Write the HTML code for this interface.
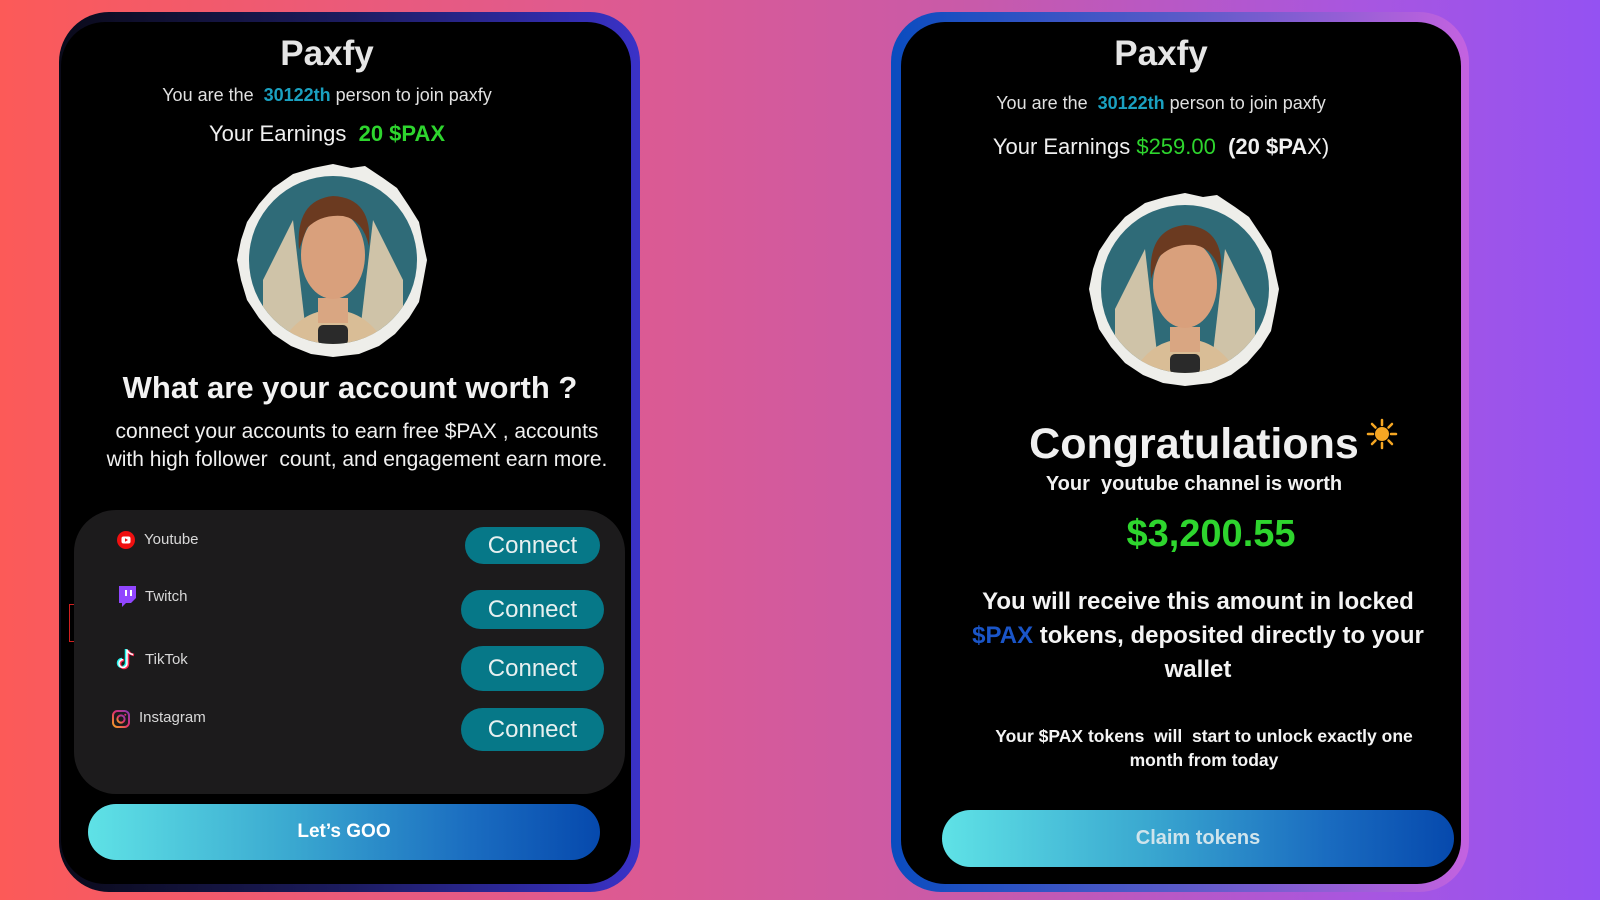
<!DOCTYPE html>
<html><head><meta charset="utf-8"><style>
*{margin:0;padding:0;box-sizing:border-box}
body{width:1600px;height:900px;overflow:hidden;position:relative;font-family:"Liberation Sans",sans-serif;background:linear-gradient(90deg,#fc5a58 0%,#e05a8e 35%,#c95aa8 60%,#a856e0 85%,#9452f2 100%)}
.abs{position:absolute}
.c{text-align:center;white-space:nowrap}
.card{position:absolute;border-radius:50px}
.inner{position:absolute;background:#000;border-radius:44px}
.btn{position:absolute;background:#067888;border-radius:22px;color:#e8f0f0;font-size:24px;text-align:center}
.row{position:absolute;color:#d8d8d8;font-size:15px}
.grad{position:absolute;border-radius:30px;background:linear-gradient(90deg,#5fe2e6 0%,#3aa8d0 40%,#1a6cc0 75%,#0649ad 100%);text-align:center;font-weight:bold}
</style></head><body>

<!-- LEFT CARD -->
<div class="card" style="left:59px;top:12px;width:581px;height:880px;background:linear-gradient(90deg,#0a0a1a 0%,#1c1c60 50%,#3a32c8 100%)"></div>
<div class="inner" style="left:61px;top:22px;width:570px;height:862px"></div>

<div class="abs c" style="left:61px;width:532px;top:34px;font-size:35px;font-weight:bold;color:#e6e6e6">Paxfy</div>
<div class="abs c" style="left:61px;width:532px;top:85px;font-size:18px;color:#e0e0e0">You are the &nbsp;<b style="color:#1aa0c0">30122th</b> person to join paxfy</div>
<div class="abs c" style="left:61px;width:532px;top:121px;font-size:22px;color:#f0f0f0">Your Earnings &nbsp;<b style="color:#2ed52e">20 $PAX</b></div>

<svg class="abs" style="left:233px;top:160px" width="200" height="200" viewBox="0 0 200 200">
<path d="M100 4 L118 8 L132 6 L150 18 L164 28 L176 46 L186 62 L190 82 L194 100 L190 122 L186 142 L176 158 L162 174 L146 186 L126 194 L100 197 L78 194 L58 186 L40 174 L26 158 L14 140 L8 120 L4 100 L8 80 L14 62 L26 44 L40 28 L60 14 L80 8 Z" fill="#eeeeea"/>
<clipPath id="cp1"><circle cx="100" cy="100" r="84"/></clipPath>
<g clip-path="url(#cp1)">
<rect width="200" height="200" fill="#2f6b78"/>
<path d="M30 120 L60 60 L75 190 L30 200Z" fill="#cfc3a8"/>
<path d="M170 120 L140 60 L125 190 L170 200Z" fill="#cfc3a8"/>
<path d="M40 200 Q60 150 100 150 Q140 150 160 200Z" fill="#d9bd96"/>
<rect x="85" y="138" width="30" height="25" fill="#d9a682"/>
<ellipse cx="100" cy="95" rx="32" ry="44" fill="#d9a07c"/>
<path d="M66 90 Q62 40 100 36 Q140 38 136 86 Q130 60 110 56 Q88 54 74 68 Q70 78 66 90Z" fill="#6b3a20"/>
<rect x="85" y="165" width="30" height="20" rx="5" fill="#2a2a2a"/>
</g>
</svg>

<div class="abs c" style="left:61px;width:578px;top:370px;font-size:31px;font-weight:bold;color:#f2f2f2">What are your account worth ?</div>
<div class="abs c" style="left:61px;width:592px;top:418px;font-size:21px;line-height:28px;color:#f0f0f0">connect your accounts to earn free $PAX , accounts<br>with high follower &nbsp;count, and engagement earn more.</div>

<div class="abs" style="left:74px;top:510px;width:551px;height:284px;background:#1c1b1c;border-radius:42px"></div>
<div class="abs" style="left:69px;top:604px;width:5px;height:38px;border:1px solid #d02020;border-right:none"></div>

<svg class="abs" style="left:117px;top:531px" width="18" height="18" viewBox="0 0 18 18"><circle cx="9" cy="9" r="9" fill="#f01010"/><rect x="4.5" y="5.5" width="9" height="7" rx="2" fill="#fff"/><path d="M8 7.2 L11 9 L8 10.8Z" fill="#f01010"/></svg>
<div class="row" style="left:144px;top:531px">Youtube</div>
<svg class="abs" style="left:117px;top:585px" width="20" height="22" viewBox="0 0 20 22"><path d="M2 1 H19 V13 L14 18 H9 L5 22 V18 H2Z" fill="#9146ff"/><rect x="8" y="5" width="2" height="6" fill="#fff"/><rect x="13" y="5" width="2" height="6" fill="#fff"/></svg>
<div class="row" style="left:145px;top:588px">Twitch</div>
<svg class="abs" style="left:114px;top:647px" width="22" height="24" viewBox="0 0 22 24"><path d="M12 2 V16 A4 4 0 1 1 8 12" stroke="#25f4ee" stroke-width="2.5" fill="none"/><path d="M14 3 V17 A4 4 0 1 1 10 13 M14 3 Q15 7 20 8" stroke="#fe2c55" stroke-width="2.5" fill="none"/><path d="M13 2.5 V16.5 A4 4 0 1 1 9 12.5 M13 2.5 Q14 6.5 19 7.5" stroke="#fff" stroke-width="1.5" fill="none"/></svg>
<div class="row" style="left:145px;top:651px">TikTok</div>
<svg class="abs" style="left:112px;top:710px" width="18" height="18" viewBox="0 0 18 18"><defs><linearGradient id="ig" x1="0" y1="1" x2="1" y2="0"><stop offset="0" stop-color="#f5a623"/><stop offset=".5" stop-color="#e1306c"/><stop offset="1" stop-color="#833ab4"/></linearGradient></defs><rect x="1" y="1" width="16" height="16" rx="4.5" fill="none" stroke="url(#ig)" stroke-width="2"/><circle cx="9" cy="9" r="3.6" fill="none" stroke="url(#ig)" stroke-width="2"/><circle cx="13.3" cy="4.7" r="1" fill="#e1306c"/></svg>
<div class="row" style="left:139px;top:709px">Instagram</div>

<div class="btn" style="left:465px;top:527px;width:135px;height:37px;line-height:37px">Connect</div>
<div class="btn" style="left:461px;top:590px;width:143px;height:39px;line-height:39px">Connect</div>
<div class="btn" style="left:461px;top:646px;width:143px;height:45px;line-height:45px">Connect</div>
<div class="btn" style="left:461px;top:708px;width:143px;height:43px;line-height:43px">Connect</div>

<div class="grad" style="left:88px;top:804px;width:512px;height:56px;line-height:56px;color:#fff;font-size:19px">Let’s GOO</div>

<!-- RIGHT CARD -->
<div class="card" style="left:891px;top:12px;width:578px;height:880px;background:linear-gradient(90deg,#0a4cbf 0%,#5a5ac8 50%,#c462e0 100%)"></div>
<div class="inner" style="left:901px;top:22px;width:560px;height:862px"></div>

<div class="abs c" style="left:901px;width:520px;top:34px;font-size:35px;font-weight:bold;color:#e6e6e6">Paxfy</div>
<div class="abs c" style="left:901px;width:520px;top:93px;font-size:18px;color:#e0e0e0">You are the &nbsp;<b style="color:#1aa0c0">30122th</b> person to join paxfy</div>
<div class="abs c" style="left:901px;width:520px;top:134px;font-size:22px;color:#f0f0f0">Your Earnings <span style="color:#2ed52e">$259.00</span> &nbsp;<b>(20 $PA</b>X)</div>

<svg class="abs" style="left:1085px;top:189px" width="200" height="200" viewBox="0 0 200 200">
<path d="M100 4 L118 8 L132 6 L150 18 L164 28 L176 46 L186 62 L190 82 L194 100 L190 122 L186 142 L176 158 L162 174 L146 186 L126 194 L100 197 L78 194 L58 186 L40 174 L26 158 L14 140 L8 120 L4 100 L8 80 L14 62 L26 44 L40 28 L60 14 L80 8 Z" fill="#eeeeea"/>
<clipPath id="cp2"><circle cx="100" cy="100" r="84"/></clipPath>
<g clip-path="url(#cp2)">
<rect width="200" height="200" fill="#2f6b78"/>
<path d="M30 120 L60 60 L75 190 L30 200Z" fill="#cfc3a8"/>
<path d="M170 120 L140 60 L125 190 L170 200Z" fill="#cfc3a8"/>
<path d="M40 200 Q60 150 100 150 Q140 150 160 200Z" fill="#d9bd96"/>
<rect x="85" y="138" width="30" height="25" fill="#d9a682"/>
<ellipse cx="100" cy="95" rx="32" ry="44" fill="#d9a07c"/>
<path d="M66 90 Q62 40 100 36 Q140 38 136 86 Q130 60 110 56 Q88 54 74 68 Q70 78 66 90Z" fill="#6b3a20"/>
<rect x="85" y="165" width="30" height="20" rx="5" fill="#2a2a2a"/>
</g>
</svg>

<div class="abs c" style="left:901px;width:586px;top:420px;font-size:43px;font-weight:bold;color:#f0f0f0">Congratulations</div>
<svg class="abs" style="left:1366px;top:418px" width="32" height="32" viewBox="0 0 32 32"><g stroke="#f5a623" stroke-width="2.5" stroke-linecap="round"><path d="M16 2v5M16 25v5M2 16h5M25 16h5M6 6l3.5 3.5M22.5 22.5L26 26M26 6l-3.5 3.5M6 26l3.5-3.5"/></g><circle cx="16" cy="16" r="7" fill="#f5a623"/></svg>
<div class="abs c" style="left:901px;width:586px;top:473px;font-size:20px;font-weight:bold;color:#f2f2f2">Your &nbsp;youtube channel is worth</div>
<div class="abs c" style="left:901px;width:620px;top:513px;font-size:38px;font-weight:bold;color:#2ed52e">$3,200.55</div>
<div class="abs c" style="left:901px;width:594px;top:585px;font-size:24px;line-height:34px;font-weight:bold;color:#f4f4f4">You will receive this amount in locked<br><span style="color:#1a55c8">$PAX</span> tokens, deposited directly to your<br>wallet</div>
<div class="abs c" style="left:901px;width:606px;top:724px;font-size:17.5px;line-height:24px;font-weight:bold;color:#f4f4f4">Your $PAX tokens &nbsp;will &nbsp;start to unlock exactly one<br>month from today</div>

<div class="grad" style="left:942px;top:810px;width:512px;height:57px;line-height:57px;color:#cfe4ec;font-size:20px">Claim tokens</div>

</body></html>
